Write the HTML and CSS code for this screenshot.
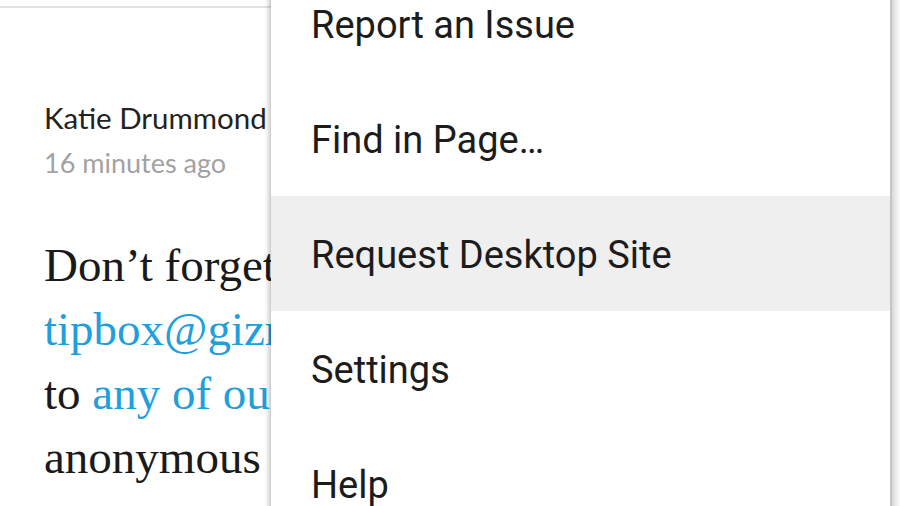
FILE: index.html
```html
<!DOCTYPE html>
<html lang="en">
<head>
  <meta charset="UTF-8" />
  <meta name="viewport" content="width=device-width, initial-scale=1.0">
  <title>Gizmodo - menu</title>
  <link rel="stylesheet" href="styles.css">
</head>
<body>
  <div class="page">
    <div class="topbar"></div>
    <div class="article">
      <div class="byline">
        <div class="author">Katie Drummond</div>
        <div class="time">16 minutes ago</div>
      </div>
      <p class="body-text">
        Don’t forget you can<br>
        <a href="#">tipbox@gizmodo.com</a><br>
        to <a href="#">any of our writers</a><br>
        anonymous
      </p>
    </div>
  </div>

  <div class="menu">
    <div class="menu-item">Report an Issue</div>
    <div class="menu-item">Find in Page…</div>
    <div class="menu-item active">Request Desktop Site</div>
    <div class="menu-item">Settings</div>
    <div class="menu-item">Help</div>
  </div>
</body>
</html>
```

FILE: styles.css
```css
html, body {
  margin: 0; padding: 0; height: 100%;
  overflow: hidden;
  background: white;
}
body {
  position: relative;
}
.page {
  width: 271px;
  overflow: hidden;
}
.topbar {
  height: 6px;
  border-bottom: 2px solid #e2e2e2;
}
.article {
  padding-left: 44px;
  width: 600px;
}
.byline {
  margin-top: 87px;
  font-family: 'Lato', sans-serif;
  line-height: 45px;
}
.author { color: #222; font-size: 29.5px; }
.time { color: #a2a2a2; font-size: 27px; }
.body-text {
  margin: 48px 0 0;
  font-family: 'Liberation Serif', serif;
  font-size: 47px;
  line-height: 64px;
  color: #1a1a1a;
  white-space: nowrap;
}
.body-text a {
  color: #1f9fdc;
  text-decoration: none;
}
.menu {
  position: absolute;
  top: -34px; left: 271px;
  width: 619px;
  background: white;
  border-right: 2px solid #c6c6c6;
  box-shadow: -2px 0 5px rgba(0,0,0,0.25), 5px 0 6px rgba(0,0,0,0.12);
  font-family: 'Roboto', sans-serif;
  font-size: 38px;
  color: #1c1c1c;
}
.menu-item {
  height: 111px;
  line-height: 111px;
  padding: 4px 0 0 40px;
  white-space: nowrap;
}
.menu-item.active {
  background: #efefef;
}
```
